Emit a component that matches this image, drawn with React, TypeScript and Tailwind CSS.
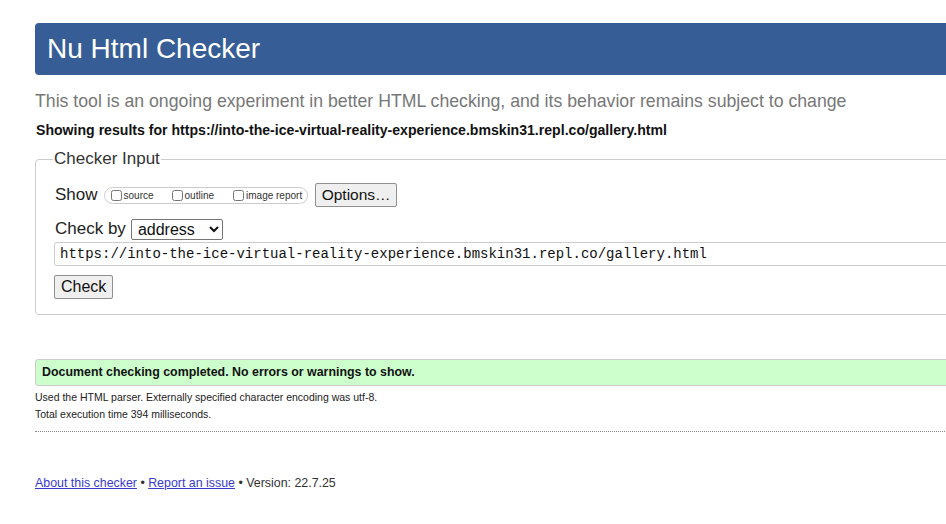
import { useState } from "react";

const url = "https://into-the-ice-virtual-reality-experience.bmskin31.repl.co/gallery.html";

export default function App() {
  const [addr, setAddr] = useState(url);

  return (
    <div className="w-[946px] h-[524px] overflow-hidden bg-white font-['Liberation_Sans',Arial,sans-serif] text-[#222]">
      <div className="ml-[35px] w-[960px] pt-[23px]">
        {/* title bar */}
        <h1 className="h-[52px] rounded-[4px] bg-[#365d95] pl-[12px] text-[28px] leading-[52px] text-white">
          Nu Html Checker
        </h1>

        <p className="mt-[15px] h-[22px] text-[17.7px] leading-[22px] text-[#777]">
          This tool is an ongoing experiment in better HTML checking, and its behavior remains subject to change
        </p>
        <p className="mt-[10px] pl-px text-[14.1px] font-bold leading-[16px] text-[#111]">
          Showing results for {url}
        </p>

        {/* input form */}
        <fieldset className="mt-[11px] h-[166px] rounded-[4px] border border-[#ccc] pl-[19px] pt-[13px]">
          <legend className="-ml-[2px] px-px text-[17px] leading-[20px] text-[#333]">Checker Input</legend>

          <div className="flex h-[26px] items-center">
            <span className="text-[17px] text-[#222]">Show</span>
            <div className="ml-[6px] flex h-[17px] items-center rounded-full border border-[#ccc] pl-[6px] pr-[5px] text-[10px] text-[#333]">
              <label className="flex items-center">
                <input type="checkbox" className="m-0 h-[11px] w-[11px]" />
                <span className="ml-[2px]">source</span>
              </label>
              <label className="ml-[18px] flex items-center">
                <input type="checkbox" className="m-0 h-[11px] w-[11px]" />
                <span className="ml-[2px]">outline</span>
              </label>
              <label className="ml-[19px] flex items-center">
                <input type="checkbox" className="m-0 h-[11px] w-[11px]" />
                <span className="ml-[2px]">image report</span>
              </label>
            </div>
            <button className="ml-[7px] h-[24px] w-[82px] rounded-[2px] border border-[#8f8f8f] bg-[#efefef] text-[15.5px] leading-[20px] text-[#111]">
              Options…
            </button>
          </div>

          <div className="mt-[10px] flex h-[22px] items-center">
            <span className="text-[17px] text-[#222]">Check by</span>
            <select className="ml-[5px] h-[21px] w-[92px] rounded-[2px] border border-[#767676] bg-white pl-[2px] text-[16px] leading-[19px] text-[#111]">
              <option>address</option>
              <option>file upload</option>
              <option>text input</option>
            </select>
          </div>

          <input
            className="-ml-px mt-[2px] block h-[24px] w-[920px] rounded-[3px] border border-[#ccc] bg-white pl-[5px] font-['Liberation_Mono',monospace] text-[14px] text-[#111] outline-none"
            value={addr}
            onChange={(e) => setAddr(e.target.value)}
          />

          <button className="-ml-px mt-[9px] block h-[24px] rounded-[2px] border border-[#8f8f8f] bg-[#efefef] px-[6px] text-[16px] leading-[20px] text-[#111]">
            Check
          </button>
        </fieldset>

        {/* result */}
        <div className="mt-[44px] flex h-[27px] items-center rounded-[3px] border border-[#ccc] bg-[#ccffcc] pl-[6px] text-[12.4px] font-bold text-[#111]">
          Document checking completed. No errors or warnings to show.
        </div>
        <p className="mt-[3px] text-[10.5px] leading-[17px] text-[#222]">
          Used the HTML parser. Externally specified character encoding was utf-8.
        </p>
        <p className="text-[10.5px] leading-[17px] text-[#222]">Total execution time 394 milliseconds.</p>
        <hr className="mt-[8px] border-0 border-t border-dotted border-[#888]" />

        {/* footer */}
        <p className="mt-[42px] text-[12.4px] text-[#333]">
          <a href="#" className="text-[#3a3ac8] underline">About this checker</a>
          {" • "}
          <a href="#" className="text-[#3a3ac8] underline">Report an issue</a>
          {" • Version: 22.7.25"}
        </p>
      </div>
    </div>
  );
}
